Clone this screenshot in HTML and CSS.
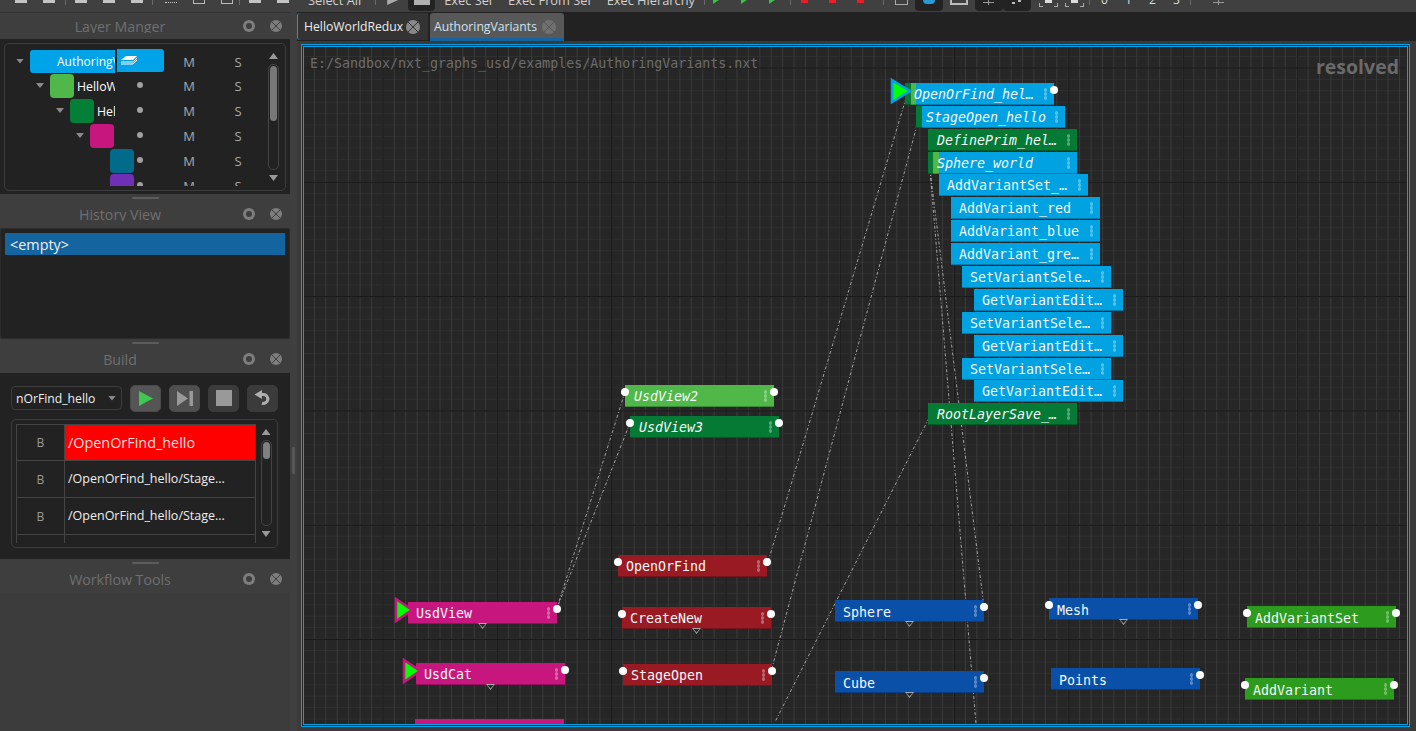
FILE: index.html
```html
<!DOCTYPE html>
<html lang="en">
<head>
<meta charset="utf-8">
<title>Authoring Variants</title>
<link rel="stylesheet" href="styles.css">
</head>
<body>
<div class="toolbar">
  <div class="tg g1"><i class="ic"></i><i class="ic"></i></div><b class="sep"></b>
  <div class="tg g2"><i class="ic"></i><i class="ic"></i><i class="ic"></i></div><b class="sep"></b>
  <div class="tg g3"><i class="ic dotted"></i><i class="ic box"></i><i class="ic box"></i></div><b class="sep"></b>
  <div class="tg g4"><i class="ic"></i><i class="ic"></i></div>
  <span class="tt select">Select All</span><b class="sep"></b>
  <div class="tg g5"><i class="tri"></i><span class="dark d1"><i class="sq"></i></span></div>
  <span class="tt t1">Exec Sel</span><span class="tt t2">Exec From Sel</span><span class="tt t2">Exec Hierarchy</span><b class="sep s702"></b>
  <div class="tg g6"><i class="gtri"></i><i class="gtri"></i><i class="gtri"></i></div><b class="sep"></b>
  <div class="tg g7"><i class="red"></i><i class="red"></i><i class="red"></i></div><b class="sep"></b>
  <div class="tg g8"><i class="brk"></i><span class="dark d2"><i class="blue"></i></span><i class="ic box wide"></i><span class="dark d3"><i class="plus"></i></span><span class="dark d3"><i class="dot2"></i></span><i class="ic corners"></i><i class="ic corners"></i></div><b class="sep"></b>
  <div class="tg g9"><span class="num">0</span><span class="num">1</span><span class="num">2</span><span class="num">3</span></div><b class="sep"></b>
  <div class="tg g10"><i class="plus"></i></div>
</div>

<div class="app">
  <aside class="side">
    <section class="panel">
      <header class="ptitle first"><span class="ptext">Layer Manger</span><span class="pbtns"><i class="pb float"></i><i class="pb close"></i></span></header>
      <div class="pbody layer-body">
        <div class="tree">
          <div class="rows">
            <div class="row">
              <div class="name l0"><i class="arrow"></i><span class="root"><span class="root-t">AuthoringVariants</span></span></div>
              <div class="cell"><span class="stackbtn"><svg width="18" height="13" viewBox="0 0 18 13"><path d="M1 7 6 3h11l-4 4z" fill="#fff"/><path d="M1 9h12l4-4M1 11h12l4-4" stroke="#fff" fill="none"/></svg></span></div>
              <div class="cell">M</div><div class="cell">S</div>
            </div>
            <div class="row">
              <div class="name l1"><i class="arrow"></i><i class="sw c-green"></i><span class="lbl w38">HelloWorldRedux</span></div>
              <div class="cell"><i class="dot"></i></div><div class="cell">M</div><div class="cell">S</div>
            </div>
            <div class="row">
              <div class="name l2"><i class="arrow"></i><i class="sw c-dgreen"></i><span class="lbl w18">HelloWorld</span></div>
              <div class="cell"><i class="dot"></i></div><div class="cell">M</div><div class="cell">S</div>
            </div>
            <div class="row">
              <div class="name l3"><i class="arrow"></i><i class="sw c-mag"></i></div>
              <div class="cell"><i class="dot"></i></div><div class="cell">M</div><div class="cell">S</div>
            </div>
            <div class="row">
              <div class="name l4"><i class="sw c-teal"></i></div>
              <div class="cell"><i class="dot"></i></div><div class="cell">M</div><div class="cell">S</div>
            </div>
            <div class="row">
              <div class="name l4"><i class="sw c-purple"></i></div>
              <div class="cell"><i class="dot"></i></div><div class="cell">M</div><div class="cell">S</div>
            </div>
          </div>
          <div class="vscroll tree-scroll"><i class="up"></i><div class="track"><i class="thumb"></i></div><i class="down"></i></div>
        </div>
      </div>
    </section>

    <section class="panel">
      <header class="ptitle"><i class="handle"></i><span class="ptext">History View</span><span class="pbtns"><i class="pb float"></i><i class="pb close"></i></span></header>
      <div class="pbody history-body"><div class="hist-sel">&lt;empty&gt;</div></div>
    </section>

    <section class="panel">
      <header class="ptitle"><i class="handle"></i><span class="ptext">Build</span><span class="pbtns"><i class="pb float"></i><i class="pb close"></i></span></header>
      <div class="pbody build-body">
        <div class="controls">
          <div class="combo"><span>nOrFind_hello</span><i class="arrow"></i></div>
          <button class="bbtn b-play"><svg width="16" height="17" viewBox="0 0 16 17"><path d="M1 1 15 8.500 1 16z" fill="#3fc84f"/></svg></button>
          <button class="bbtn b-step"><svg width="16" height="15" viewBox="0 0 16 15"><path d="M0 0 11 7.500 0 15z M12.500 0H16V15H12.500z" fill="#999"/></svg></button>
          <button class="bbtn b-dark"><svg width="16" height="16" viewBox="0 0 16 16"><rect width="16" height="16" fill="#999"/></svg></button>
          <button class="bbtn b-dark"><svg width="17" height="16" viewBox="0 0 17 16"><path d="M6 4.500h3.500a4.500 4.500 0 1 1-1.500 8.800" fill="none" stroke="#b0b0b0" stroke-width="3"/><path d="M8 0 .5 4.500 8 9z" fill="#b0b0b0"/></svg></button>
        </div>
        <div class="jobs">
          <div class="jtable">
            <div class="jrow hot"><span class="jb">B</span><span class="jn">/OpenOrFind_hello</span></div>
            <div class="jrow"><span class="jb">B</span><span class="jn">/OpenOrFind_hello/Stage...</span></div>
            <div class="jrow"><span class="jb">B</span><span class="jn">/OpenOrFind_hello/Stage...</span></div>
            <div class="jrow"><span class="jb"></span><span class="jn"></span></div>
          </div>
          <div class="vscroll job-scroll"><i class="up"></i><div class="track"><i class="thumb"></i></div><i class="down"></i></div>
        </div>
      </div>
    </section>

    <section class="panel last">
      <header class="ptitle"><i class="handle"></i><span class="ptext">Workflow Tools</span><span class="pbtns"><i class="pb float"></i><i class="pb close"></i></span></header>
    </section>
  </aside>

  <div class="split"><i class="split-h"></i></div>

  <main class="main">
    <div class="tabs">
      <div class="tab inactive"><span>HelloWorldRedux</span><i class="tabx"></i></div>
      <div class="tab active"><span>AuthoringVariants</span><i class="tabx"></i></div>
    </div>
    <div class="frame">
      <div class="canvas">
        <svg class="wires" width="1103" height="677" viewBox="304 47 1103 677">
          <g fill="none" stroke="#a4a4a4" stroke-width="1" stroke-dasharray="3 2 1 2">
            <path d="M906 98 768 562"/>
            <path d="M917 125 772 668"/>
            <path d="M625 392 557 608"/>
            <path d="M630 423 557 608"/>
            <path d="M929 418 775 722"/>
            <path d="M930 170 984 607"/>
            <path d="M930 170 976 724"/>
          </g>
        </svg>

        <div class="path">E:/Sandbox/nxt_graphs_usd/examples/AuthoringVariants.nxt</div>
        <div class="resolved">resolved</div>

        <div class="node n-blue it n1 st-a">OpenOrFind_hel…<i class="grip"></i><i class="port r"></i>
          <svg class="play pb1" width="22" height="26" viewBox="0 0 22 26"><path d="M2 2 20 13 2 24z" fill="#0f0" stroke="#00a2e2" stroke-width="2.500"/></svg></div>
        <div class="node n-blue it n2 st-b">StageOpen_hello<i class="grip"></i></div>
        <div class="node n-dgreen it n3">DefinePrim_hel…<i class="grip"></i></div>
        <div class="node n-blue it n4 st-c">Sphere_world<i class="grip"></i></div>
        <div class="node n-blue n5">AddVariantSet_…<i class="grip"></i></div>
        <div class="node n-blue n6">AddVariant_red<i class="grip"></i></div>
        <div class="node n-blue n7">AddVariant_blue<i class="grip"></i></div>
        <div class="node n-blue n8">AddVariant_gre…<i class="grip"></i></div>
        <div class="node n-blue n9">SetVariantSele…<i class="grip"></i></div>
        <div class="node n-blue n10">GetVariantEdit…<i class="grip"></i></div>
        <div class="node n-blue n11">SetVariantSele…<i class="grip"></i></div>
        <div class="node n-blue n12">GetVariantEdit…<i class="grip"></i></div>
        <div class="node n-blue n13">SetVariantSele…<i class="grip"></i></div>
        <div class="node n-blue n14">GetVariantEdit…<i class="grip"></i></div>
        <div class="node n-dgreen it n15">RootLayerSave_…<i class="grip"></i></div>

        <div class="node n-lgreen it n16">UsdView2<i class="grip"></i><i class="port l"></i><i class="port r"></i></div>
        <div class="node n-dgreen it n17">UsdView3<i class="grip"></i><i class="port l"></i><i class="port r"></i></div>

        <div class="node n-red n18">OpenOrFind<i class="grip"></i><i class="port l"></i><i class="port r"></i></div>
        <div class="node n-red n19">CreateNew<i class="grip"></i><i class="port l"></i><i class="port r"></i><i class="dtri t74"></i></div>
        <div class="node n-red n20">StageOpen<i class="grip"></i><i class="port l"></i><i class="port r"></i></div>

        <div class="node n-mag n21">UsdView<i class="grip"></i><i class="port r"></i><i class="dtri"></i>
          <svg class="play pb2" width="20" height="26" viewBox="0 0 20 26"><path d="M2 2 18 13 2 24z" fill="#0f0" stroke="#c7177f" stroke-width="2.500"/></svg></div>
        <div class="node n-mag n22">UsdCat<i class="grip"></i><i class="port r"></i><i class="dtri"></i>
          <svg class="play pb2" width="20" height="26" viewBox="0 0 20 26"><path d="M2 2 18 13 2 24z" fill="#0f0" stroke="#c7177f" stroke-width="2.500"/></svg></div>
        <div class="node n-mag n23"></div>

        <div class="node n-navy n24">Sphere<i class="grip"></i><i class="port r"></i><i class="dtri"></i></div>
        <div class="node n-navy n25">Cube<i class="grip"></i><i class="port r"></i><i class="dtri"></i></div>
        <div class="node n-navy n26">Mesh<i class="grip"></i><i class="port l"></i><i class="port r"></i><i class="dtri"></i></div>
        <div class="node n-navy n27">Points<i class="grip"></i><i class="port r"></i></div>

        <div class="node n-grass n28">AddVariantSet<i class="grip"></i><i class="port l"></i><i class="port r"></i></div>
        <div class="node n-grass n29">AddVariant<i class="grip"></i><i class="port l"></i><i class="port r"></i></div>
      </div>
    </div>
  </main>
</div>
</body>
</html>
```
FILE: styles.css
```css
* { box-sizing: border-box; }
html, body { margin: 0; height: 731px; overflow: hidden; }
body { background: #3c3c3c; font-family: "Open Sans", "Liberation Sans", sans-serif; color: #e6e6e6; }
i { display: block; font-style: normal; }

/* toolbar: only its lower edge is in view */
.toolbar { height: 12px; background: #404040; display: flex; align-items: flex-start; overflow: hidden; }
.sep { width: 1px; height: 5px; background: #6a6a6a; flex: none; }
.s702 { margin-left: 9px; }
.tg { display: flex; flex: none; align-items: flex-start; }
.ic { width: 12px; height: 3px; background: #c4c4c4; flex: none; }
.g1 { padding: 0 10px 0 15px; gap: 16px; }
.g2 { padding: 0 9px; gap: 16px; }
.g3 { padding: 0 6px 0 12px; gap: 16px; }
.g4 { padding: 0 0 0 9px; gap: 16px; }
.dotted { background: none; border-bottom: 1px dotted #ccc; height: 3px; }
.box { background: none; border: 1px solid #bbb; border-top: 0; height: 4px; }
.wide { width: 18px; height: 5px; border-width: 2px; }
.corners { width: 19px; height: 7px; background:
  linear-gradient(#ddd,#ddd) center 0/7px 3px no-repeat,
  linear-gradient(#aaa,#aaa) 0 100%/4px 1px no-repeat,
  linear-gradient(#aaa,#aaa) 100% 100%/4px 1px no-repeat,
  linear-gradient(#aaa,#aaa) 0 3px/1px 4px no-repeat,
  linear-gradient(#aaa,#aaa) 100% 3px/1px 4px no-repeat; }
.tt { font-size: 12.800px; line-height: 12px; margin-top: -6px; color: #d0d0d0; white-space: nowrap; flex: none; }
.select { margin: -6px 14px 0 19px; }
.g5 { padding: 0 0 0 11px; gap: 10px; }
.tri { width: 11px; height: 5px; background: #aaa; clip-path: polygon(0 0, 100% 0, 0 100%); }
.dark { background: #232323; border-radius: 0 0 4px 4px; height: 11px; display: flex; justify-content: center; flex: none; }
.d1 { width: 27px; }
.sq { width: 16px; height: 5px; background: #b0b0b0; }
.t1 { margin-left: 9px; }
.t2 { margin-left: 16px; }
.g6 { padding: 0 15px 0 8px; gap: 22px; }
.gtri { width: 6px; height: 4px; background: #38c24a; clip-path: polygon(0 0, 100% 0, 0 100%); }
.g7 { padding: 0 19px 0 10px; gap: 21px; }
.red { width: 7px; height: 3px; background: #ee1c25; }
.g8 { padding: 0 5px 0 11px; gap: 7px; }
.brk { width: 13px; height: 5px; border: 1px solid #aaa; border-top: 0; }
.d2 { width: 28px; }
.blue { width: 12px; height: 4px; background: #2a9ad6; border-radius: 0 0 5px 5px; }
.d3 { width: 28px; margin-right: -7px; }
.d3 + .ic { margin-left: 8px; }
.plus { width: 11px; height: 5px; background: linear-gradient(#999,#999) 0 2px/100% 1px no-repeat, linear-gradient(#999,#999) center 0/1px 100% no-repeat; }
.dot2 { width: 9px; height: 4px; background: linear-gradient(#bbb,#bbb) 0 2px/3px 2px no-repeat, linear-gradient(#bbb,#bbb) right 0/3px 2px no-repeat; }
.g9 { padding: 0 0 0 11px; gap: 18px; }
.num { width: 6px; font-size: 12px; line-height: 10px; margin-top: -5px; color: #ddd; }
.g9 .num:last-child { margin-right: 11px; }
.g10 { padding-left: 22px; }

/* app shell */
.app { display: flex; height: 719px; }
.side { width: 290px; flex: none; display: flex; flex-direction: column; background: #3c3c3c; padding-top: 1px; box-shadow: inset 0 1px #333; }
.split { width: 7px; flex: none; background: #3f3f3f; display: flex; align-items: center; justify-content: center; padding-bottom: 1px; }
.split-h { width: 3px; height: 27px; background: #565656; border-radius: 1px; margin-top: 178px; }
.main { flex: 1; min-width: 0; display: flex; flex-direction: column; background: #3a3a3a; }

/* dock panels */
.panel { flex: none; }
.panel.last { flex: 1; }
.ptitle { height: 34px; position: relative; display: grid; grid-template-columns: 240px 1fr; align-items: end; padding-bottom: 7px; background: #3e3e3e; }
.ptitle.first { height: 26px; padding-bottom: 6px; }
.ptext { text-align: center; font-size: 14.200px; line-height: 17px; height: 15px; overflow: hidden; color: #6f6f6f; }
.pbtns { display: flex; gap: 15px; padding: 0 0 1px 3px; align-self: end; }
.pb { width: 12px; height: 12px; border-radius: 50%; background: #7d7d7d; position: relative; }
.pb.float::after { content: ""; position: absolute; inset: 3px; border-radius: 50%; background: #3e3e3e; }
.pb.close { background:
  linear-gradient(45deg, transparent 46%, #3e3e3e 46% 54%, transparent 54%) center/8px 8px no-repeat,
  linear-gradient(-45deg, transparent 46%, #3e3e3e 46% 54%, transparent 54%) center/8px 8px no-repeat,
  #7d7d7d; }
.handle { position: absolute; left: 132px; top: 3px; width: 27px; height: 2px; background: #5c5c5c; border-radius: 1px; }
.pbody { background: #222; }

/* layer manager */
.layer-body { height: 155px; padding: 4px 4px 3px 4px; }
.tree { height: 148px; border: 1px solid #3d3d3d; border-radius: 5px; padding: 5px 0 5px; display: flex; }
.rows { width: 257px; height: 137px; overflow: hidden; flex: none; }
.row { display: grid; grid-template-columns: 110px 49px 50px 48px; height: 25px; font-size: 13px; color: #a9a9a9; }
.name { display: flex; align-items: center; white-space: nowrap; }
.l0 { padding-left: 11px; }
.l1 { padding-left: 31px; }
.l2 { padding-left: 51px; }
.l3 { padding-left: 71px; }
.l4 { padding-left: 105px; }
.name .arrow { margin: 0 6px 2px 0; }
.arrow { width: 8px; height: 5px; background: #8a8a8a; clip-path: polygon(0 0, 100% 0, 50% 100%); flex: none; }
.root { flex: none; width: 85px; height: 23px; background: #00a2e8; border-radius: 3px 0 0 3px; overflow: hidden; padding-left: 27px; color: #fff; font-size: 12px; line-height: 23px; margin-bottom: 2px; }
.root-t { display: block; width: 58px; overflow: hidden; }
.sw { width: 24px; height: 24px; border-radius: 4px; flex: none; margin-bottom: 1px; }
.c-green { background: #50b848; }
.c-dgreen { background: #047f38; }
.c-mag { background: #c7177f; }
.c-teal { background: #006b8a; }
.c-purple { background: #7030b5; }
.lbl { margin-left: 3px; overflow: hidden; color: #fff; font-size: 12.300px; }
.w38 { width: 38px; }
.w18 { width: 18px; }
.cell { display: flex; align-items: center; justify-content: center; padding-bottom: 1px; }
.dot { width: 6px; height: 6px; background: #a0a0a0; border-radius: 50%; margin-bottom: 3px; }
.stackbtn { width: 47px; height: 23px; margin: 0 0 2px 2px; background: #00a2e8; border-radius: 0 3px 3px 0; display: flex; padding: 4px 0 0 3px; }

.vscroll { display: flex; flex-direction: column; align-items: center; flex: none; }
.up, .down { width: 9px; height: 6px; background: #999; flex: none; }
.up { clip-path: polygon(50% 0, 100% 100%, 0 100%); }
.down { clip-path: polygon(0 0, 100% 0, 50% 100%); }
.track { border: 1px solid #444; border-radius: 5px; width: 11px; flex: 1; margin: 5px 0; padding: 1px; }
.thumb { background: #777; border-radius: 4px; height: 100%; }
.tree-scroll { width: 11px; margin: 4px 0 4px 6px; height: 128px; }
.tree-scroll .thumb { height: 55px; }
.job-scroll { width: 12px; margin: 5px 0 0 4px; height: 108px; }
.job-scroll .thumb { height: 17px; background: #808080; }

/* history */
.history-body { height: 111px; padding: 5px 5px 4px; border-radius: 3px; box-shadow: inset 0 0 0 1px #2c2c2c; }
.hist-sel { height: 22px; background: #1464a0; color: #f0f0f0; font-size: 14.400px; line-height: 24px; padding-left: 5px; }

/* build */
.build-body { height: 186px; padding: 11px 12px 0 11px; }
.controls { display: flex; align-items: center; gap: 8px; height: 28px; }
.combo { width: 111px; height: 24px; border: 1px solid #3d3d3d; border-radius: 4px; display: flex; align-items: center; justify-content: space-between; padding: 0 5px 0 4px; font-size: 12.200px; color: #eee; }
.bbtn { width: 31px; height: 27px; padding: 0; border: 1px solid #4a4a4a; border-radius: 5px; display: flex; align-items: center; justify-content: center; }
.b-play { background: #555; }
.b-step { background: #4f4f4f; }
.b-dark { background: #3b3b3b; border-color: #3b3b3b; }
.jobs { margin-top: 7px; height: 129px; width: 267px; border: 1px solid #3d3d3d; border-radius: 5px; padding: 4px 0 0 4px; display: flex; }
.jtable { width: 240px; height: 119px; overflow: hidden; flex: none; border-left: 1px solid #444; border-top: 1px solid #444; }
.jrow { display: grid; grid-template-columns: 48px 1fr; height: 37px; border-bottom: 1px solid #444; border-right: 1px solid #444; font-size: 12.500px; }
.jb { border-right: 1px solid #444; display: flex; align-items: center; justify-content: center; color: #9a9a9a; font-size: 12px; }
.jn { padding-left: 3px; line-height: 35px; color: #eee; white-space: nowrap; }
.hot { height: 36px; }
.hot .jn { background: #f00; color: #fdd; font-size: 14.400px; }

/* tabs */
.tabs { height: 29px; background: #222; display: flex; align-items: flex-start; gap: 2px; padding-top: 1px; flex: none; }
.tab { display: flex; align-items: center; height: 27px; font-size: 12.200px; padding: 0 0 0 6px; white-space: nowrap; }
.tab span { flex: 1; }
.inactive { width: 131px; background: #333; color: #eee; border-left: 1px solid #00a2e8; border-radius: 3px 0 0 3px; }
.active { width: 134px; height: 28px; padding: 2px 0 0 4px; background: #585858; color: #cfe3ee; border-bottom: 3px solid #1464a0; border-radius: 3px 3px 0 0; }
.tabx { width: 14px; height: 14px; border-radius: 50%; margin-right: 8px; background:
  linear-gradient(45deg, transparent 46%, #333 46% 54%, transparent 54%) center/10px 10px no-repeat,
  linear-gradient(-45deg, transparent 46%, #333 46% 54%, transparent 54%) center/10px 10px no-repeat,
  #888; }
.active .tabx { background:
  linear-gradient(45deg, transparent 46%, #555 46% 54%, transparent 54%) center/10px 10px no-repeat,
  linear-gradient(-45deg, transparent 46%, #555 46% 54%, transparent 54%) center/10px 10px no-repeat,
  #707070; }

/* graph */
.frame { margin: 3px 6px 4px 4px; height: 683px; border: 1px solid #00a2e8; padding: 1px; background: #252525; }
.canvas { position: relative; height: 100%; border: 1px solid #00a2e8; overflow: hidden; background-color: #262626;
  background-image:
    linear-gradient(to right, #181818 1px, transparent 1px),
    linear-gradient(to bottom, #181818 1px, transparent 1px),
    linear-gradient(to right, #3a3a3a 1px, transparent 1px),
    linear-gradient(to bottom, #2f2f2f 1px, transparent 1px);
  background-size: 114.300px 100%, 100% 114.300px, 11.430px 100%, 100% 11.430px;
  background-position: 78.500px 0, 0 20.500px, 9.900px 0, 0 9.070px; }
.wires { position: absolute; left: 0; top: 0; }
.path { position: absolute; left: 6px; top: 10px; font: 13.300px/14px "DejaVu Sans Mono", "Liberation Mono", monospace; color: #6c6c6c; white-space: nowrap; }
.resolved { position: absolute; right: 8px; top: 8px; font-size: 19.500px; line-height: 24px; font-weight: 700; color: #6a6a6a; }

.node { position: absolute; width: 149px; height: 22px; display: flex; align-items: center; padding: 3px 0 0 8px; font: 13.300px/16px "DejaVu Sans Mono", "Liberation Mono", monospace; color: #f4f8f8; white-space: nowrap; border-bottom: 1px solid rgba(0,0,0,.25); }
.it { font-style: italic; padding-left: 9px; }
.grip { position: absolute; right: 6px; top: 5px; width: 5px; height: 12px; background: radial-gradient(circle at center, rgba(255,255,255,.32) 1.500px, transparent 2px) 0 0/5px 4px; }
.port { position: absolute; top: 3px; width: 8px; height: 8px; background: #fff; border-radius: 50%; z-index: 2; }
.port.l { left: -4px; }
.port.r { right: -4px; }
.dtri { position: absolute; left: 70px; top: 21px; width: 9px; height: 6px; background: #aaa; clip-path: polygon(0 0, 100% 0, 50% 100%, 0 0, 15% 18%, 50% 76%, 85% 18%, 15% 18%); }
.t74 { left: 70px; }
.play { position: absolute; z-index: 3; }
.pb1 { left: -15px; top: -5px; }
.pb2 { left: -14px; top: -5px; }

.n-blue { background: #00a2e2; }
.n-dgreen { background: #047a35; }
.n-lgreen { background: #50b848; }
.n-red { background: #9a1a24; }
.n-mag { background: #c7177f; }
.n-navy { background: #0a50a8; padding-top: 4px; }
.n-grass { background: #2d9b1e; padding-top: 5px; }
.st-a { background: linear-gradient(to right, #047a35 6px, #50b848 6px 11px, #00a2e2 11px); }
.st-b { background: linear-gradient(to right, #047a35 6px, #00a2e2 6px); padding-left: 10px; }
.st-c { background: linear-gradient(to right, #047a35 5px, #50b848 5px 11px, #00a2e2 11px); }

/* node places on the canvas (origin 304, 47) */
.n1 { left: 601px; top: 36px; }
.n2 { left: 612px; top: 59px; }
.n3 { left: 624px; top: 82px; }
.n4 { left: 624px; top: 105px; }
.n5 { left: 635px; top: 127px; }
.n6 { left: 647px; top: 150px; }
.n7 { left: 647px; top: 173px; }
.n8 { left: 647px; top: 196px; }
.n9 { left: 658px; top: 219px; }
.n10 { left: 670px; top: 242px; }
.n11 { left: 658px; top: 265px; }
.n12 { left: 670px; top: 288px; }
.n13 { left: 658px; top: 311px; }
.n14 { left: 670px; top: 333px; }
.n15 { left: 624px; top: 356px; }
.n16 { left: 321px; top: 338px; }
.n17 { left: 326px; top: 369px; }
.n18 { left: 314px; top: 508px; }
.n19 { left: 318px; top: 560px; }
.n20 { left: 319px; top: 617px; }
.n21 { left: 104px; top: 555px; }
.n22 { left: 112px; top: 616px; }
.n23 { left: 111px; top: 672px; }
.n24 { left: 531px; top: 553px; }
.n25 { left: 531px; top: 624px; }
.n26 { left: 745px; top: 551px; }
.n27 { left: 747px; top: 621px; }
.n28 { left: 943px; top: 559px; }
.n29 { left: 941px; top: 631px; }
```
